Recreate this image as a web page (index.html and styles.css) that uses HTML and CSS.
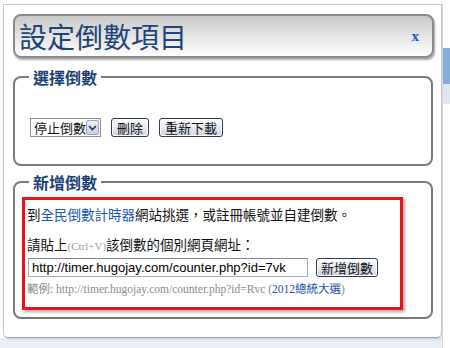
FILE: index.html
```html
<!DOCTYPE html>
<html lang="zh-Hant">
<head>
  <meta charset="UTF-8" />
  <title>設定倒數項目</title>
  <link rel="stylesheet" href="styles.css">
</head>
<body>
  <div class="page">
    <div class="dialog">
      <div class="titlebar">
        <h1>設定倒數項目</h1>
        <a class="close" href="#">x</a>
      </div>

      <!-- pick an existing countdown -->
      <fieldset class="box box-select">
        <legend>選擇倒數</legend>
        <div class="row">
          <div class="select">
            <span>停止倒數</span>
            <span class="arrow">
              <svg width="9" height="6" viewBox="0 0 9 6"><path d="M1 1 L4.5 4.5 L8 1" fill="none" stroke="#333" stroke-width="1.6"/></svg>
            </span>
          </div>
          <button class="btn">刪除</button>
          <button class="btn">重新下載</button>
        </div>
      </fieldset>

      <!-- add a new one -->
      <fieldset class="box box-add">
        <legend>新增倒數</legend>
        <div class="notice">
          <p class="line">到<a href="#">全民倒數計時器</a>網站挑選，或註冊帳號並自建倒數。</p>
          <p class="line line-paste">請貼上<span class="hint">(Ctrl+V)</span>該倒數的個別網頁網址：</p>
          <div class="url-row">
            <input type="text" class="url" value="http://timer.hugojay.com/counter.php?id=7vk" />
            <button class="btn">新增倒數</button>
          </div>
          <p class="example"><span class="cjk">範例:</span> http://timer.hugojay.com/counter.php?id=Rvc (<a href="#">2012總統大選</a>)</p>
        </div>
      </fieldset>
    </div>
    <div class="side"></div>
  </div>
</body>
</html>
```

FILE: styles.css
```css
body {
  margin: 0;
  background: #fff;
  font-family: "Noto Sans CJK TC", "Liberation Sans", sans-serif;
}
.page {
  display: flex;
  height: 348px;
  padding: 4px 0 0 3px;
  box-sizing: border-box;
  background: linear-gradient(#fff 338px, #e9eef4 338px);
}
.dialog {
  width: 440px;
  height: 334px;
  box-sizing: border-box;
  background: #fff;
  border: 1px solid #c3c7cc;
  border-bottom-color: #9aa6b4;
  border-radius: 0 0 5px 5px;
  padding: 9px 0 0 9px;
  box-shadow: 1px 1px 2px rgba(0,0,0,.15);
}
.side {
  width: 7px;
  background: linear-gradient(#fff 44px, #86aedb 44px, #86aedb 80px, #dfe8f2 80px, #dfe8f2 100px, #fff 100px);
  border-left: 1px solid #d8d8d8;
}
.titlebar {
  width: 421px;
  height: 44px;
  box-sizing: border-box;
  display: flex;
  align-items: center;
  justify-content: space-between;
  padding: 0 13px 0 4px;
  border: 2px solid #8a8a8a;
  border-radius: 8px;
  background: linear-gradient(#c9c9c9, #ececec 65%, #fff);
  box-shadow: 1px 2px 2px rgba(0,0,0,.35);
}
.titlebar h1 {
  margin: 0;
  font-size: 28px;
  font-weight: 400;
  line-height: 1;
  color: #1e4577;
}
.close {
  font: bold 15px "Liberation Serif", serif;
  color: #1f55c4;
  text-decoration: none;
}
.box {
  width: 420px;
  box-sizing: border-box;
  margin: 0;
  border: 2px solid #7a7a7a;
  border-radius: 8px;
  padding: 0;
}
.box legend {
  padding: 0 4px;
  font-size: 16px;
  font-weight: 700;
  line-height: 20px;
  color: #1c3f72;
}
.box-select {
  margin-top: 9px;
  padding: 0 0 27px 15px;
}
.box-select legend {
  margin-left: -1px;
}
.row {
  display: flex;
  align-items: center;
  gap: 10px;
  margin-top: 31px;
}
.select {
  display: flex;
  align-items: center;
  justify-content: space-between;
  width: 71px;
  height: 19px;
  box-sizing: border-box;
  border: 1px solid #8f8f8f;
  padding: 0 1px 0 3px;
  font-size: 13px;
  color: #111;
}
.arrow {
  display: flex;
  align-items: center;
  justify-content: center;
  width: 13px;
  height: 15px;
  box-sizing: border-box;
  border: 1px solid #91a8c6;
  border-radius: 2px;
  background: linear-gradient(#e8eff8, #c2d4ea);
}
.btn {
  height: 19px;
  padding: 0 5px;
  font-family: "Noto Sans CJK TC", sans-serif;
  font-size: 13px;
  line-height: 15px;
  color: #111;
  border: 1px solid #2f3b55;
  border-radius: 3px;
  background: linear-gradient(#fff, #e4e7ee 55%, #cfd5e0);
  box-shadow: inset 0 0 0 1px #fff;
}
.box-add {
  margin-top: 6px;
  padding: 0 0 7px 7px;
}
.box-add legend {
  margin-left: 7px;
}
.notice {
  width: 381px;
  box-sizing: border-box;
  margin-top: 5px;
  padding: 5px 4px 10px 2px;
  border: 3px solid #e8131b;
  box-shadow: 2px 2px 3px rgba(0,0,0,.35);
  font-size: 13.5px;
  color: #111;
}
.line {
  margin: 0;
  line-height: 18px;
  white-space: nowrap;
}
.line a {
  color: #1c55b1;
  text-decoration: none;
}
.line-paste {
  margin-top: 12px;
}
.hint {
  font: 11px "Liberation Serif", serif;
  color: #a0a0a0;
}
.url-row {
  display: flex;
  align-items: center;
  gap: 8px;
  margin-top: 5px;
  margin-left: 1px;
}
.url-row .btn {
  padding: 0 4px;
}
.url {
  width: 280px;
  height: 19px;
  box-sizing: border-box;
  padding: 0 3px;
  border: 1px solid #a5acb5;
  border-top-color: #7d848c;
  font: 13px "Liberation Sans", sans-serif;
  color: #000;
}
.example {
  margin: 4px 0 0;
  font: 11.5px "Liberation Serif", serif;
  line-height: 15px;
  color: #8a8a8a;
  white-space: nowrap;
}
.example .cjk {
  font-family: "Noto Sans CJK TC", sans-serif;
}
.example a {
  color: #1c4fa3;
  text-decoration: none;
  font-family: "Liberation Serif", "Noto Sans CJK TC", serif;
}
```
